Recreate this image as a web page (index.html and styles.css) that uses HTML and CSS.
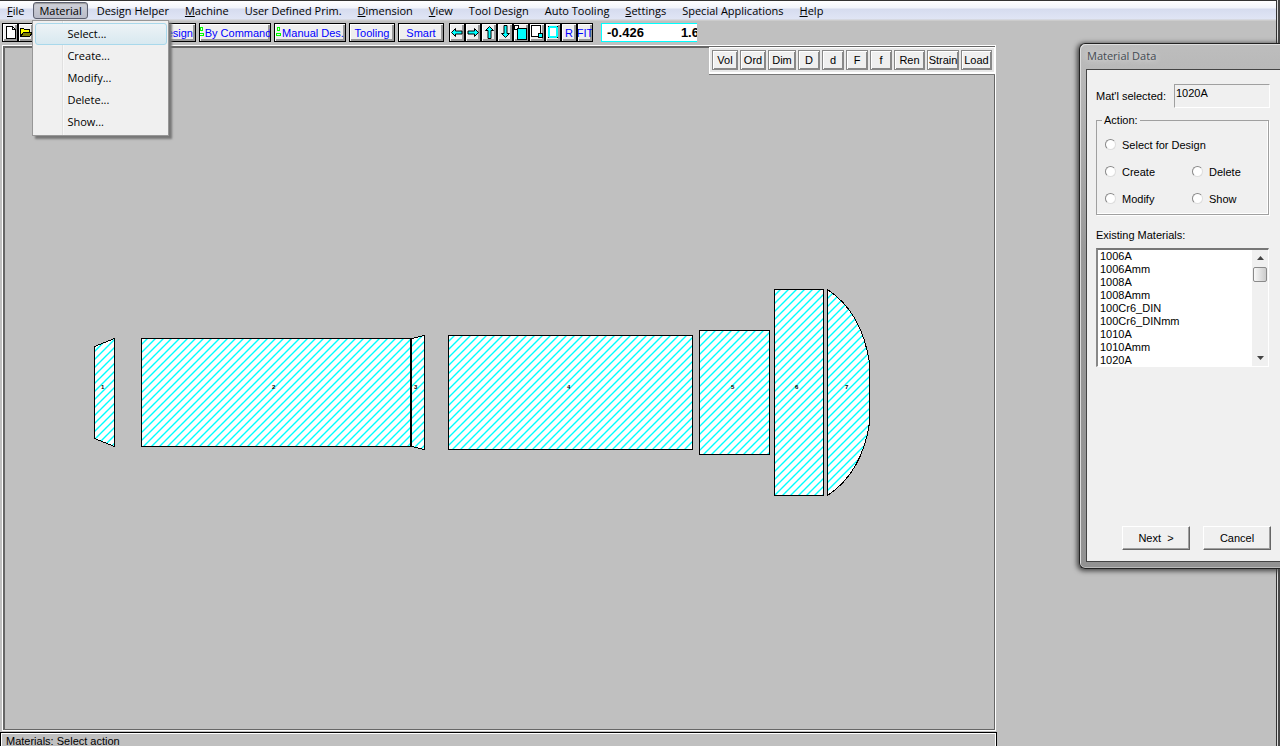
FILE: index.html
```html
<!DOCTYPE html>
<html lang="en">
<head>
<meta charset="utf-8">
<title>Material Data</title>
<link rel="stylesheet" href="styles.css">
</head>
<body>
<div class="app">
  <nav class="menubar">
    <button class="menu"><u>F</u>ile</button>
    <div class="menu-wrap">
      <button class="menu menu-open">Material</button>
      <div class="dropdown">
        <button class="item item-active">Select...</button>
        <button class="item">Create...</button>
        <button class="item">Modify...</button>
        <button class="item">Delete...</button>
        <button class="item">Show...</button>
      </div>
    </div>
    <button class="menu">Design Helper</button>
    <button class="menu"><u>M</u>achine</button>
    <button class="menu">User Defined Prim.</button>
    <button class="menu"><u>D</u>imension</button>
    <button class="menu"><u>V</u>iew</button>
    <button class="menu">Tool Design</button>
    <button class="menu">Auto Tooling</button>
    <button class="menu"><u>S</u>ettings</button>
    <button class="menu">Special Applications</button>
    <button class="menu"><u>H</u>elp</button>
  </nav>
  <div class="toolbar">
    <div class="group files">
      <button class="tool" aria-label="New"><svg width="14" height="17" shape-rendering="crispEdges"><path d="M3.500 2.500h6l3 3v9h-9z" fill="#fff" stroke="#000"/><path d="M9.500 2.500v3h3" fill="none" stroke="#000"/></svg></button>
      <button class="tool" aria-label="Open"><svg width="14" height="17" shape-rendering="crispEdges"><path d="M1.500 12.500v-8h3l1 1h5v3" fill="#ff0" stroke="#000"/><path d="M1.500 12.500l3-4h9l-3 4z" fill="#808000" stroke="#000"/></svg></button>
    </div>
    <div class="group labels">
      <button class="tool design">Design</button>
      <button class="tool command"><svg class="mark" width="5" height="12" shape-rendering="crispEdges"><path d="M1.500 .5h2v3h-2zM.5 6.500h4v2h-4z" fill="none" stroke="#0f0"/></svg>By Command</button>
      <button class="tool command"><svg class="mark" width="5" height="12" shape-rendering="crispEdges"><path d="M1.500 .5h2v3h-2zM.5 6.500h4v2h-4z" fill="none" stroke="#0f0"/></svg>Manual Des.</button>
      <button class="tool short">Tooling</button>
      <button class="tool short">Smart</button>
    </div>
    <div class="group view">
      <button class="tool" aria-label="Left"><svg width="14" height="17"><path d="M1.500 8.500l4-4v2.500h6.500v3H5.500v2.500z" fill="#0ff" stroke="#000"/></svg></button>
      <button class="tool" aria-label="Right"><svg width="14" height="17"><path d="M12.500 8.500l-4-4v2.500H2v3h6.500v2.500z" fill="#0ff" stroke="#000"/></svg></button>
      <button class="tool" aria-label="Up"><svg width="14" height="17"><path d="M7.500 2.500l4 4H9v8H6v-8H3.500z" fill="#0ff" stroke="#000"/></svg></button>
      <button class="tool" aria-label="Down"><svg width="14" height="17"><path d="M7.500 13.500l4-4H9v-8H6v8H3.500z" fill="#0ff" stroke="#000"/></svg></button>
      <button class="tool" aria-label="Zoom in"><svg width="14" height="17" shape-rendering="crispEdges"><path d="M.5 1.500h4v4h-4z" fill="#fff" stroke="#000"/><path d="M3.500 4.500h9v11h-9z" fill="#0ff" stroke="#000"/></svg></button>
      <button class="tool" aria-label="Zoom out"><svg width="14" height="17" shape-rendering="crispEdges"><path d="M1.500 1.500h9v11h-9z" fill="#fff" stroke="#000"/><path d="M8.500 9.500h4v4h-4z" fill="#0ff" stroke="#000"/></svg></button>
      <button class="tool" aria-label="Window"><svg width="14" height="17" shape-rendering="crispEdges"><path d="M3 3h8v10H3z" fill="#fff" stroke="#0ff" stroke-width="2"/><path d="M2 2h1v1H2zM11 2h1v1h-1zM2 13h1v1H2zM11 13h1v1h-1z"/></svg></button>
      <button class="tool">R</button>
      <button class="tool">FIT</button>
    </div>
    <div class="coords"><span>-0.426</span><span>1.6</span></div>
  </div>
  <div class="main">
    <div class="left">
      <div class="workspace">
        <svg class="canvas">
          <defs>
            <pattern id="hatch" width="8" height="8" patternUnits="userSpaceOnUse"><path d="M-1 7l8-8M5 9l4-4" stroke="#0ff" stroke-width="1.400"/></pattern>
            <g id="parts">
              <path d="M94.500 346.500l20-8v108l-20-8z"/>
              <path d="M141.500 338.500h269v108h-269z"/>
              <path d="M411.500 338.500l13-3v114l-13-3z"/>
              <path d="M448.500 335.500h244v114h-244z"/>
              <path d="M699.500 330.500h70v124h-70z"/>
              <path d="M774.500 289.500h49v206h-49z"/>
              <path d="M827.500 289.500C848 303 864 326 869.500 363v60C864 459 848 482 827.500 495.500z"/>
            </g>
          </defs>
          <g transform="translate(-5 -48)">
            <use href="#parts" fill="#fff"/>
            <use href="#parts" fill="url(#hatch)" stroke="#000" shape-rendering="crispEdges"/>
            <g class="number"><text x="101" y="389">1</text><text x="272" y="389">2</text><text x="414" y="389">3</text><text x="567" y="389">4</text><text x="731" y="389">5</text><text x="795" y="389">6</text><text x="845" y="389">7</text></g>
          </g>
        </svg>
        <div class="palette">
          <button class="pal w26">Vol</button><button class="pal w26">Ord</button><button class="pal w28">Dim</button><button class="pal">D</button><button class="pal">d</button><button class="pal">F</button><button class="pal">f</button><button class="pal w31">Ren</button><button class="pal w32">Strain</button><button class="pal w31">Load</button>
        </div>
      </div>
      <div class="status">Materials: Select action</div>
    </div>
  </div>
  <form class="dialog">
    <h1 class="title">Material Data</h1>
    <div class="client">
      <div class="selected"><label for="mat">Mat'l selected:</label><input id="mat" class="field" value="1020A" readonly></div>
      <fieldset class="action">
        <legend>Action:</legend>
        <label class="wide"><input type="radio" name="a">Select for Design</label>
        <label><input type="radio" name="a">Create</label>
        <label><input type="radio" name="a">Delete</label>
        <label><input type="radio" name="a">Modify</label>
        <label><input type="radio" name="a">Show</label>
      </fieldset>
      <label class="caption" for="list">Existing Materials:</label>
      <div class="listbox">
        <select id="list" size="9">
          <option>1006A</option><option>1006Amm</option><option>1008A</option><option>1008Amm</option><option>100Cr6_DIN</option><option>100Cr6_DINmm</option><option>1010A</option><option>1010Amm</option><option>1020A</option>
        </select>
        <div class="scroll">
          <svg width="7" height="4"><path d="M0 4l3.500-4L7 4z" fill="#444"/></svg>
          <div class="thumb"></div>
          <svg class="down" width="7" height="4"><path d="M0 0l3.500 4L7 0z" fill="#444"/></svg>
        </div>
      </div>
      <div class="actions"><button type="button" class="push">Next &nbsp;&gt;</button><button type="button" class="push">Cancel</button></div>
    </div>
  </form>
</div>
</body>
</html>
```
FILE: styles.css
```css
* { box-sizing: border-box; }
body { margin: 0; background: #c0c0c0; color: #000; font: 11px "Liberation Sans", Arial, sans-serif; }
button, input, select { font: inherit; color: inherit; margin: 0; }
button { padding: 0; white-space: nowrap; }
svg { display: block; flex: none; }

.app { position: relative; display: flex; flex-direction: column; height: 100vh; overflow: hidden; padding-right: 4px; box-shadow: inset -2px 0 #484848, inset -3px 0 #ddd, inset -4px 0 #333; }

.menubar { display: flex; flex: none; align-items: stretch; gap: 2px; height: 21px; padding: 1px 0 2px; border-top: 1px solid #333; background: linear-gradient(#fff 0, #f2f4fb 35%, #d6dcef 40%, #e0e5f5 90%, #ccc 95%); font-family: "Open Sans", "Noto Sans", sans-serif; }
.menu-wrap { position: relative; display: flex; }
.menu { border: 1px solid transparent; border-radius: 3px; background: none; padding: 0 6px; line-height: 15px; }
.menu-open { border-color: #5c6070; background: linear-gradient(#d0d1d8, #b9bcca); box-shadow: inset 0 1px 1px #999; padding: 0 5px; }
.dropdown { position: absolute; z-index: 3; top: 18px; left: -1px; width: 137px; padding: 2px; border: 1px solid #979797; background: linear-gradient(90deg, #f0f0f0 29px, #e0e0e0 29px, #e0e0e0 30px, #fff 30px, #f0f0f0 31px); box-shadow: 3px 3px 2px #777; }
.item { display: block; width: 132px; height: 22px; padding: 0 0 2px 31px; border: 1px solid transparent; border-radius: 3px; background: none; text-align: left; }
.item-active { border-color: #a8d8eb; background: linear-gradient(#edf3f6, #d8e9f0); }

.toolbar { display: flex; align-items: flex-start; height: 23px; flex: none; padding: 2px 0 0 2px; color: #00f; }
.group { display: flex; }
.tool { display: flex; align-items: center; justify-content: center; height: 19px; border: 1px solid #000; background: #efefef; box-shadow: inset 1px 1px #fff, inset -2px -2px #999; overflow: hidden; }
.files .tool, .view .tool { width: 16px; }
.labels { gap: 3px; margin-left: 96px; }
.design { width: 66px; justify-content: flex-end; padding-right: 2px; }
.command { width: 72px; gap: 1px; }
.mark { align-self: flex-start; margin-top: 3px; }
.short { width: 46px; }
.view { margin-left: 5px; }
.coords { display: flex; gap: 37px; width: 96px; height: 19px; margin-left: 8px; padding-left: 5px; overflow: hidden; border: 1px solid #0ff; border-right: 0; background: #fff; color: #000; font-size: 13px; font-weight: bold; line-height: 17px; }

.main { display: flex; flex: 1; min-height: 0; }
.left { display: flex; flex-direction: column; width: 79%; max-width: 997px; }
.workspace { position: relative; flex: 1; min-height: 0; margin: 1px 1px 1px 2px; border: 1px solid #fff; box-shadow: inset 2px 2px #666, inset -1px -1px #666; padding: 2px 0 0 2px; }
.canvas { width: 100%; height: 100%; }
.palette { position: absolute; top: 1px; right: 0; display: flex; gap: 2px; padding: 2px; border: 1px solid #fff; border-bottom-width: 2px; background: #e8e8e8; box-shadow: 0 1px #777; }
.pal { width: 22px; height: 20px; border: 1px solid #888; background: #efefef; box-shadow: inset 1px 1px #fff, inset -1px -1px #888; overflow: hidden; }
.w26 { width: 26px; }
.w28 { width: 28px; }
.w31 { width: 31px; }
.w32 { width: 32px; }
.number { font-size: 6px; font-weight: bold; stroke: none; }
.status { height: 14px; padding-left: 5px; border: solid #000; border-width: 1px 1px 0; box-shadow: inset 1px 1px #fff, inset -1px 0 #fff; line-height: 17px; overflow: hidden; }

.dialog { position: absolute; z-index: 2; top: 43px; right: 0; width: 201px; padding: 0 0 6px 6px; border: 1px solid #222; border-right: 0; border-radius: 6px 0 0 6px; background: linear-gradient(#bdbdbd, #999 40%, #929292); box-shadow: inset 1px 1px #ddd, inset 0 -1px #bbb, -1px 1px 5px 1px #444; }
.title { margin: 0; padding-left: 1px; height: 25px; color: #444b52; font: 11px/24px "Open Sans", "Noto Sans", sans-serif; text-shadow: 0 0 6px #eee; }
.client { display: flex; flex-direction: column; height: 493px; padding: 14px 10px 11px 9px; border: 1px solid #444; border-right: 0; background: #f0f0f0; }
.selected { display: flex; justify-content: space-between; width: 174px; align-items: center; }
.field { width: 96px; height: 24px; padding: 0 0 6px 1px; border: 1px solid #a0a0a0; border-right-color: #fff; border-bottom-color: #fff; background: #f0f0f0; outline: 0; }
.action { display: grid; grid-template-columns: 87px 1fr; grid-auto-rows: 27px; width: 173px; height: 102px; margin: 5px 0 0; padding: 4px 0 0 8px; border: 1px solid #a0a0a0; box-shadow: inset -1px -1px #fff, 1px 1px #fff; }
.action legend { padding: 0 2px; margin-left: -3px; line-height: 14px; }
.action label { display: flex; align-items: center; gap: 6px; }
.action .wide { grid-column: 1 / 3; }
.action input { appearance: none; width: 11px; height: 11px; border: 1px solid #888; border-right-color: #ddd; border-bottom-color: #ddd; border-radius: 50%; background: #fff; }
.caption { margin-top: 14px; line-height: 13px; }
.listbox { display: flex; width: 173px; height: 119px; margin-top: 6px; border: 1px solid #fff; border-top: 2px solid #777; border-left: 2px solid #888; background: #fff; overflow: hidden; }
.listbox select { flex: 1; height: 117px; padding: 0; border: 0; outline: 0; background: #fff; overflow: hidden; scrollbar-width: none; }
.listbox option { padding: 0 0 0 2px; min-height: 13px; line-height: 13px; }
.scroll { display: flex; flex-direction: column; align-items: center; width: 16px; padding: 6px 0; background: #f0f0f0; }
.thumb { width: 14px; height: 15px; margin-top: 7px; border: 1px solid #8a8a8a; border-radius: 2px; background: linear-gradient(90deg, #f8f8f8, #ccc); }
.down { margin-top: auto; }
.actions { display: flex; gap: 13px; margin: auto 0 0 26px; }
.push { width: 68px; height: 24px; flex: none; border: 1px solid #fff; border-right-color: #666; border-bottom-color: #666; background: #f0f0f0; box-shadow: inset -1px -1px #a0a0a0; }
```
